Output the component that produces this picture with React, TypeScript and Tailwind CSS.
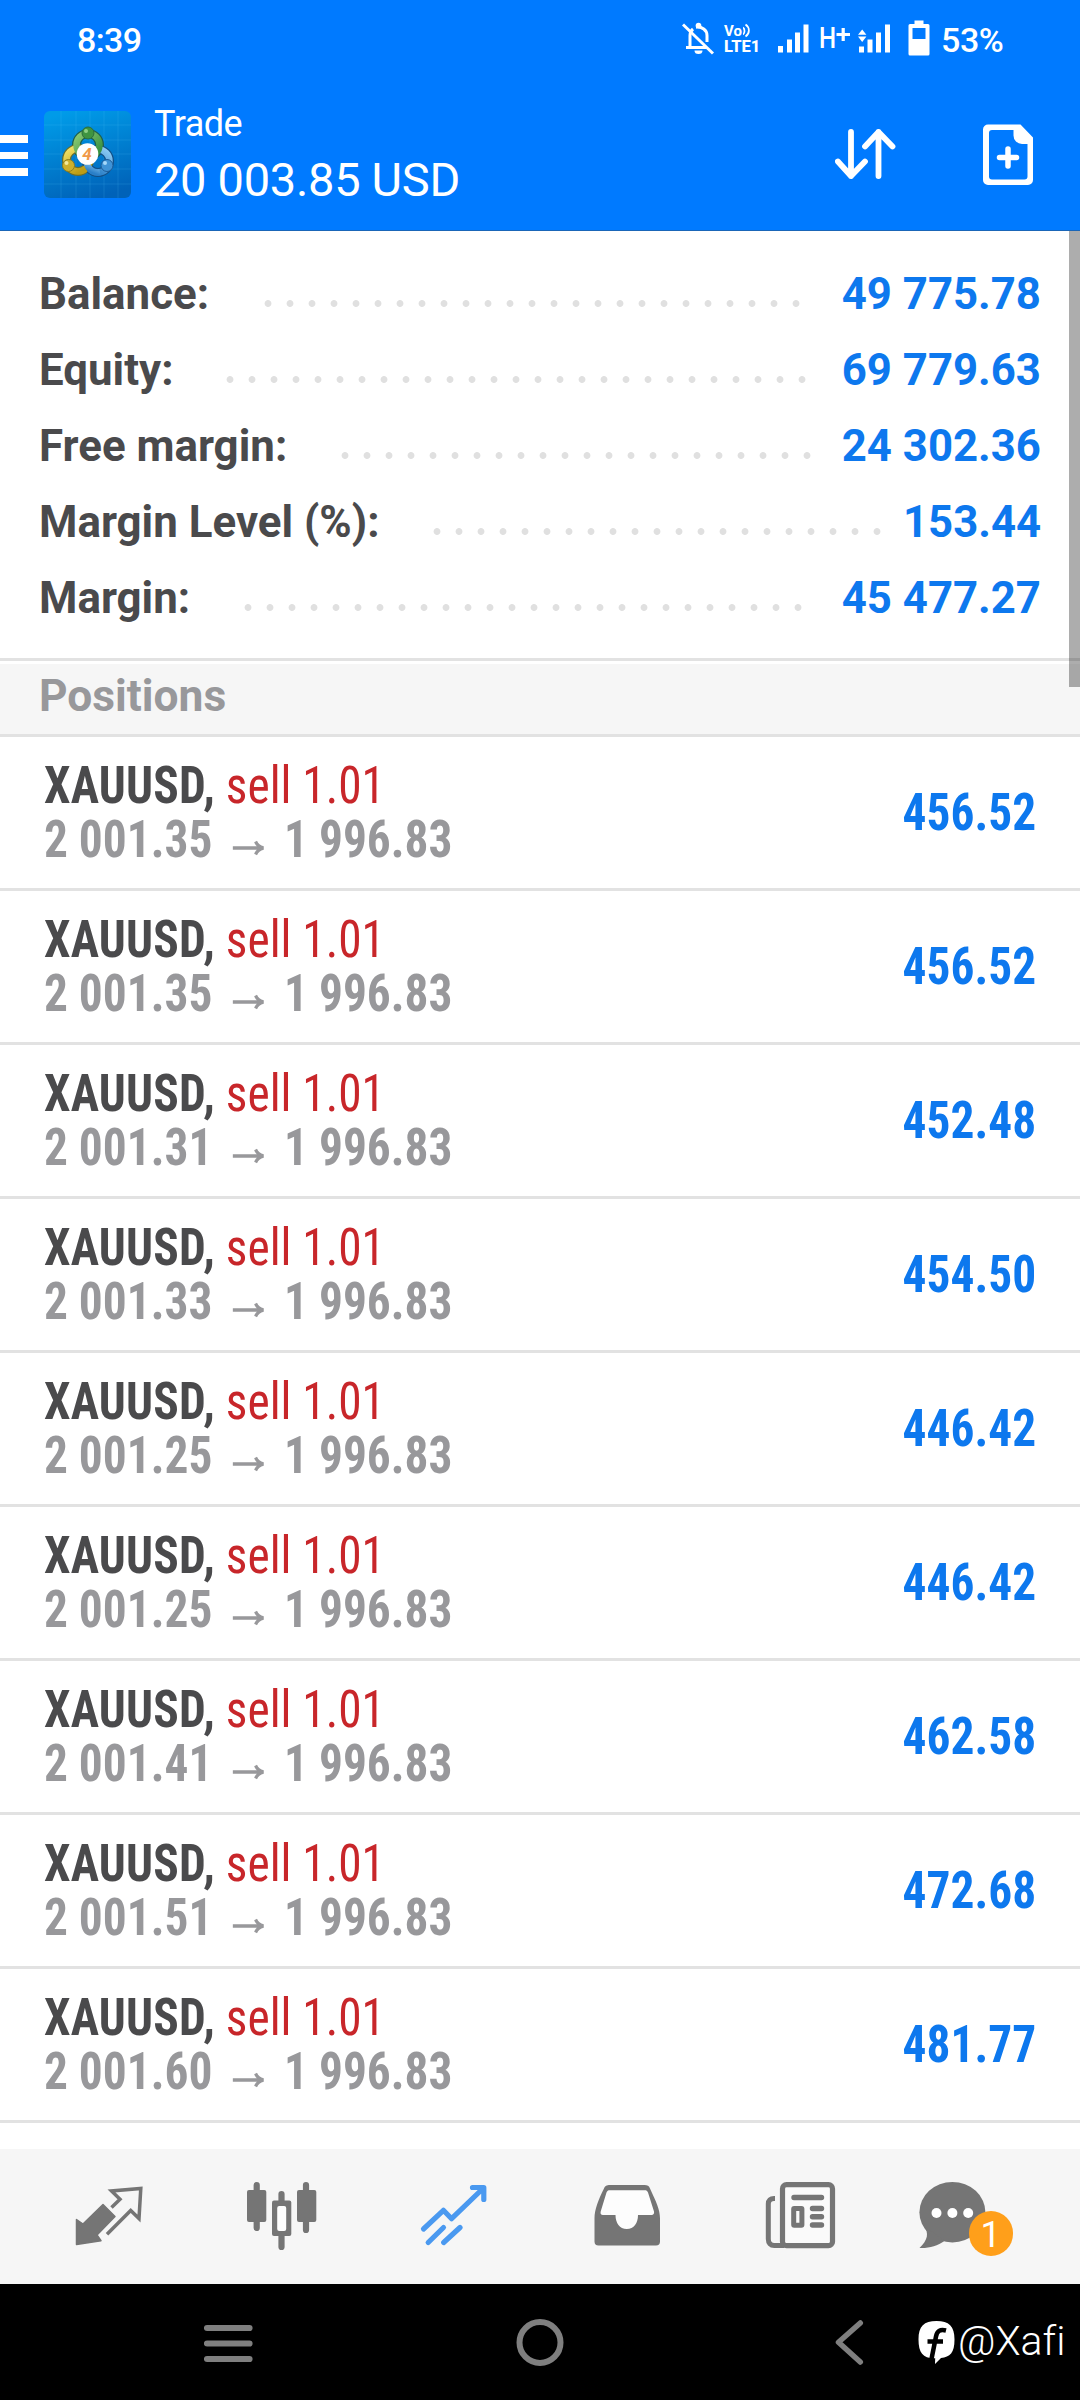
import type { ReactNode } from "react";

interface SummaryItem {
  label: string;
  value: string;
  // width of the label column and number of leader dots after it
  labelWidth: number;
  dots: number;
}

interface Position {
  open: string;
  current: string;
  profit: string;
}

const summary: SummaryItem[] = [
  { label: "Balance:", value: "49 775.78", labelWidth: 218, dots: 25 },
  { label: "Equity:", value: "69 779.63", labelWidth: 180, dots: 27 },
  { label: "Free margin:", value: "24 302.36", labelWidth: 295, dots: 22 },
  { label: "Margin Level (%):", value: "153.44", labelWidth: 387, dots: 21 },
  { label: "Margin:", value: "45 477.27", labelWidth: 198, dots: 26 },
];

const positions: Position[] = [
  { open: "2 001.35", current: "1 996.83", profit: "456.52" },
  { open: "2 001.35", current: "1 996.83", profit: "456.52" },
  { open: "2 001.31", current: "1 996.83", profit: "452.48" },
  { open: "2 001.33", current: "1 996.83", profit: "454.50" },
  { open: "2 001.25", current: "1 996.83", profit: "446.42" },
  { open: "2 001.25", current: "1 996.83", profit: "446.42" },
  { open: "2 001.41", current: "1 996.83", profit: "462.58" },
  { open: "2 001.51", current: "1 996.83", profit: "472.68" },
  { open: "2 001.60", current: "1 996.83", profit: "481.77" },
];

const StatusBar = () => (
  <div className="flex h-20 items-start pl-[77px] pt-[18px] text-white">
    <span className="w-[605px] text-[34px] leading-[44px] font-medium tracking-[-0.6px]">
      8:39
    </span>

    {/* Muted bell */}
    <svg width="32" height="40" viewBox="0 0 32 40" fill="none" stroke="currentColor">
      <path d="M8 28V17.5a8.5 8.5 0 0 1 3-6.5M14 9.2c6-.8 11 3 11 8.3V24M4 29.5h20" strokeWidth="3" />
      <circle cx="16.5" cy="7.5" r="2.8" fill="currentColor" stroke="none" />
      <path d="M12.5 32.5h8a4 3.5 0 0 1-8 0z" fill="currentColor" stroke="none" />
      <path d="M1 6.5 31 35.5" strokeWidth="3" />
    </svg>

    {/* VoLTE */}
    <div className="relative ml-[10px] h-10 w-[38px]">
      <span className="absolute top-[5px] left-0 text-[15px] leading-[17px] font-bold">Vo</span>
      <span className="absolute top-[20px] left-0 text-[16.5px] leading-[17px] font-extrabold whitespace-nowrap">
        LTE1
      </span>
      <svg className="absolute top-[5px] left-[19px]" width="9" height="16" viewBox="0 0 9 16" fill="none" stroke="currentColor" strokeWidth="1.8">
        <path d="M0 4.5c2 1.5 2 5.5 0 7M2.5 1.5c4.5 3 4.5 9 0 12" />
      </svg>
    </div>

    {/* Signal */}
    <svg className="ml-[16px]" width="31" height="40" viewBox="0 0 31 40" fill="currentColor">
      <path d="M0 28h5v6.5H0zM9 21.5h5v13H9zM17 14.5h5v20h-5zM25.5 6.5h5v28h-5z" />
    </svg>

    <span className="mt-[3px] ml-[10px] w-[17px] origin-left scale-x-[0.83] text-[29px] leading-[34px] font-medium">
      H
    </span>
    <svg width="15" height="40" viewBox="0 0 15 40" stroke="currentColor" strokeWidth="3.2">
      <path d="M.5 16.5H14M7.2 10v13" />
    </svg>

    {/* Data signal */}
    <svg className="ml-[7px]" width="33" height="40" viewBox="0 0 33 40" fill="currentColor">
      <path d="M1 28.5h5v6H1zM9.5 21.5h5v13h-5zM18 14.5h5v20h-5zM27 6.5h5v28h-5z" />
      <path d="M0 16.7 4.2 11.5l4.2 5.2zM0 18.5h8.4L4.2 24z" />
    </svg>

    {/* Battery */}
    <svg className="ml-[17px]" width="22" height="40" viewBox="0 0 22 40" fill="currentColor">
      <path
        fillRule="evenodd"
        d="M6.5 2.5h9V6H20a1.5 1.5 0 0 1 1.5 1.5V36a1.5 1.5 0 0 1-1.5 1.5H2A1.5 1.5 0 0 1 .5 36V7.5A1.5 1.5 0 0 1 2 6h4.5zM4.5 10v11h13V10z"
      />
    </svg>

    <span className="ml-[11px] text-[34px] leading-[44px] font-medium tracking-[-0.4px]">
      53%
    </span>
  </div>
);

const AppLogo = () => (
  <svg width="87" height="87" viewBox="0 0 87 87">
    <defs>
      <linearGradient id="tile" x1="0.3" y1="0" x2="0.6" y2="1">
        <stop offset="0" stopColor="#009be8" />
        <stop offset="1" stopColor="#0062b8" />
      </linearGradient>
      <linearGradient id="green" x1="0" y1="0" x2="1" y2="1">
        <stop offset="0" stopColor="#8ccb74" />
        <stop offset="1" stopColor="#2f8a3a" />
      </linearGradient>
      <linearGradient id="yellow" x1="0" y1="0" x2="0.6" y2="1">
        <stop offset="0" stopColor="#f3e36a" />
        <stop offset="1" stopColor="#bd9d14" />
      </linearGradient>
      <linearGradient id="blue" x1="1" y1="0" x2="0.4" y2="1">
        <stop offset="0" stopColor="#8fcdf5" />
        <stop offset="1" stopColor="#2a7fc8" />
      </linearGradient>
    </defs>
    <rect width="87" height="87" rx="6" fill="url(#tile)" />
    <path
      d="M17 0v87M32 0v87M46 0v87M60 0v87M74 0v87M0 14h87M0 29h87M0 43h87M0 58h87M0 73h87"
      stroke="#5cc4ff"
      strokeOpacity="0.16"
    />
    <g fill="none">
      <circle cx="44" cy="34" r="11.5" stroke="#1f5f4a" strokeWidth="9" />
      <circle cx="34" cy="49" r="11.5" stroke="#6a6f2c" strokeWidth="9" />
      <circle cx="54" cy="50" r="11.5" stroke="#124f86" strokeWidth="9" />
      <circle cx="54" cy="50" r="11.5" stroke="url(#blue)" strokeWidth="6.5" />
      <circle cx="34" cy="49" r="11.5" stroke="url(#yellow)" strokeWidth="6.5" />
      <path d="M43 53c2 6 7 9.500 13 8.200" stroke="url(#blue)" strokeWidth="6.5" />
      <circle cx="44" cy="34" r="11.5" stroke="url(#green)" strokeWidth="6.5" />
    </g>
    <circle cx="44" cy="22" r="6" fill="#3f9440" stroke="#2b6d3c" />
    <circle cx="24.5" cy="54.5" r="6" fill="#cdb02c" stroke="#8d7d1e" />
    <circle cx="63" cy="54.5" r="6" fill="#3f93d6" stroke="#1d5c99" />
    <circle cx="42" cy="20" r="2" fill="#8fd083" />
    <circle cx="22.5" cy="52" r="2" fill="#f4ea9a" />
    <circle cx="61" cy="52" r="2" fill="#a5d8fa" />
    <circle cx="43.5" cy="43" r="10.8" fill="#fff" />
    <text
      x="43"
      y="49"
      textAnchor="middle"
      className="font-[Roboto] text-[17px] font-bold italic"
      fill="#f09a4a"
    >
      4
    </text>
  </svg>
);

const Header = () => (
  <header className="h-[231px] border-b border-[#1a66b8] bg-[#007aff] text-white">
    <StatusBar />

    <div className="flex">
      <div className="mt-[55px] flex w-[44px] flex-col gap-[9px]">
        <span className="h-[7.5px] w-[28px] bg-white" />
        <span className="h-[7.5px] w-[28px] bg-white" />
        <span className="h-[7.5px] w-[28px] bg-white" />
      </div>

      <div className="mt-[31px]">
        <AppLogo />
      </div>

      <div className="mt-[22px] ml-[23px] w-[681px]">
        <p className="text-[36px] leading-[44px] tracking-[-0.5px]">Trade</p>
        <p className="mt-[6px] text-[47px] leading-[56px] tracking-[-0.3px]">
          20 003.85 USD
        </p>
      </div>

      <svg className="mt-[46px]" width="62" height="56" viewBox="0 0 62 56" fill="none" stroke="currentColor" strokeWidth="5.8" strokeLinecap="round" strokeLinejoin="round">
        <path d="M16 6v44M2.9 35.5 16 50l14-14.5" />
        <path d="M43.5 50V6M30 20.5 43.5 6l14 14.5" />
      </svg>

      <svg className="mt-[44px] ml-[86px]" width="51" height="62" viewBox="0 0 51 62">
        <path
          fillRule="evenodd"
          fill="currentColor"
          d="M5 .5h32.5L50 13.5V56a5 5 0 0 1-5 5H5a5 5 0 0 1-5-5V5.5a5 5 0 0 1 5-5zM9 6a3 3 0 0 0-3 3v43.5a3 3 0 0 0 3 3h32.5a3 3 0 0 0 3-3V20H39a8.5 8.5 0 0 1-8.5-8.5V6z"
        />
        <path d="M25 25v17M16.5 33.5h17" stroke="currentColor" strokeWidth="5.5" strokeLinecap="round" />
      </svg>
    </div>
  </header>
);

const SummaryRow = ({ label, value, labelWidth, dots }: SummaryItem) => (
  <div className="flex h-[76px] pl-[39px] pr-[39px] text-[45px] leading-[76px] font-bold whitespace-nowrap">
    <div style={{ width: labelWidth }}>
      <span className="inline-block origin-left scale-x-[0.975] text-[#4a4a4c]">{label}</span>
    </div>
    <div
      className="mt-[44px] h-[7px] bg-[radial-gradient(circle,#e0e0e0_3px,transparent_3.8px)] bg-[length:22px_7px] bg-repeat-x"
      style={{ width: dots * 22 }}
    />
    <span className="ml-auto origin-right scale-x-[0.972] text-[#0d78ee]">{value}</span>
  </div>
);

const PositionRow = ({ open, current, profit }: Position) => (
  <div className="flex h-[154px] justify-between border-b-3 border-[#e2e2e2] pr-[44px] pl-[44px] text-[51.5px] font-stretch-75% whitespace-nowrap">
    <div className="mt-[22px] origin-left scale-x-[0.92] leading-[54px]">
      <p className="font-bold text-[#4a4a4c]">
        <span className="tracking-[0.2px]">XAUUSD,</span>{" "}
        <span className="font-normal text-[#c8262a]">sell 1.01</span>
      </p>
      <p className="flex font-bold text-[#98989b]">
        <span className="w-[205px]">{open}</span>
        <svg className="mt-[26px] mr-[20px]" width="36" height="18" viewBox="0 0 36 18" fill="none" stroke="currentColor" strokeWidth="3.4">
          <path d="M0 9h32M25 2.5c1.5 3.5 4 5.5 8.5 6.5-4.5 1-7 3-8.500 6.500" />
        </svg>
        <span>{current}</span>
      </p>
    </div>
    <span className="origin-right scale-x-[0.92] leading-[151px] font-bold text-[#0d78ee]">
      {profit}
    </span>
  </div>
);

const TabIcon = ({ children }: { children: ReactNode }) => (
  <svg width="120" height="81" viewBox="0 0 120 81" fill="none">
    {children}
  </svg>
);

const TabBar = () => (
  <nav className="flex h-[135px] items-center bg-[#f6f6f6] pl-[22px] text-[#757575]">
    {/* Quotes */}
    <div className="flex w-[173px] justify-center">
      <TabIcon>
        <path
          d="M27.5 43.5 34 48 54 28.5 66 40.5 48 59l4 5.7-24.5 3.8z"
          fill="currentColor"
          stroke="currentColor"
          strokeWidth="1.5"
          strokeLinejoin="round"
        />
        <path d="m62.5 31.5 8.5-8.2-8.5-8.3 29.3-2.6-1.8 30.1-8.3-8L58 58.2" stroke="currentColor" strokeWidth="3.5" />
      </TabIcon>
    </div>

    {/* Charts */}
    <div className="flex w-[173px] justify-center">
      <TabIcon>
        <path d="M34.7 9v43M59.5 18v53M84 9v45" stroke="currentColor" strokeWidth="6.2" strokeLinecap="round" />
        <rect x="25" y="14" width="19.3" height="32" rx="2" fill="currentColor" />
        <rect x="50" y="24.5" width="19.3" height="35.5" rx="2" fill="currentColor" />
        <rect x="55.2" y="30" width="9" height="25" rx="2" fill="#fdfdfd" />
        <rect x="75" y="14" width="19.3" height="32" rx="2" fill="currentColor" />
      </TabIcon>
    </div>

    {/* Trade */}
    <div className="flex w-[172px] justify-center text-[#4a99f0]">
      <TabIcon>
        <g stroke="currentColor" strokeWidth="5.2" strokeLinecap="round" strokeLinejoin="round">
          <path d="M29.5 53 49.4 34.3 57.6 42.7 89.5 12M78.5 11.5h11.3v12" />
          <path d="M34.2 66.5 49.5 51.5M49.7 66.5 66 51.5" />
        </g>
      </TabIcon>
    </div>

    {/* History */}
    <div className="flex w-[173px] justify-center">
      <TabIcon>
        <path
          d="M43 9h34.5c3 0 4.5.8 5.5 3.5 6 13 10 21 10 30v23a4 4 0 0 1-4 4H31.5a4 4 0 0 1-4-4v-23c0-9 4-19 9.5-30 1.2-2.7 2.5-3.5 6-3.5z"
          fill="currentColor"
        />
        <path
          d="M43 14.3h34.5c2 0 2.8.6 3.5 2.2l6 19c.4 2-.5 3.5-2.5 3.5H71c0 8-4 14-11.2 14S48.5 47 48.5 39H36c-2.2 0-2.8-1.5-2.3-3.5l5.8-19c.7-1.6 1.5-2.2 3.5-2.2z"
          fill="#fdfdfd"
        />
      </TabIcon>
    </div>

    {/* News */}
    <div className="flex w-[173px] justify-center">
      <TabIcon>
        <path d="M35 22.5h-1c-3.5 0-5.7 2-5.7 5.5v35c0 4 2.2 6.5 6 6.5H44" stroke="currentColor" strokeWidth="5" />
        <rect x="42.5" y="8.7" width="50" height="61" rx="4" fill="#fafafa" stroke="currentColor" strokeWidth="5.2" />
        <path d="M54 21.5h27.5M72.5 32.5h9M72.5 40.7h9M72.5 49h9" stroke="currentColor" strokeWidth="5.4" strokeLinecap="round" />
        <rect x="53.7" y="32.5" width="8.2" height="16.7" rx="0.5" fill="#fafafa" stroke="currentColor" strokeWidth="5" />
      </TabIcon>
    </div>

    {/* Messages */}
    <div className="relative flex w-[173px] justify-center">
      <TabIcon>
        <ellipse cx="39.4" cy="36.2" rx="33" ry="30.2" fill="currentColor" />
        <path d="M11 50c5 7 4 14-4.5 22 9 .5 18-2 25-7z" fill="currentColor" />
        <circle cx="23.5" cy="37" r="5" fill="#fff" />
        <circle cx="39.4" cy="37" r="5" fill="#fff" />
        <circle cx="55.2" cy="37" r="5" fill="#fff" />
      </TabIcon>
      <span className="absolute top-[35px] left-[82.5px] h-[45px] w-[44px] rounded-full bg-[#ff9f1a] text-center text-[36px] leading-[48px] text-white">
        1
      </span>
    </div>
  </nav>
);

const SystemNav = () => (
  <div className="flex h-[116px] items-center bg-black text-[#7f7f7f]">
    <svg className="ml-[204px]" width="49" height="48" viewBox="0 0 49 48" stroke="currentColor" strokeWidth="6.2" strokeLinecap="round">
      <path d="M3 10h42.5M3 25.5h42.5M3 41h42.5" />
    </svg>
    <svg className="ml-[263px]" width="48" height="48" viewBox="0 0 48 48" fill="none" stroke="currentColor" strokeWidth="6">
      <circle cx="24" cy="24.5" r="20.5" />
    </svg>
    <svg className="ml-[270px]" width="30" height="48" viewBox="0 0 30 48" fill="none" stroke="currentColor" strokeWidth="5.5" strokeLinecap="round" strokeLinejoin="round">
      <path d="M26.3 5 4.5 24.3 26.3 44" />
    </svg>
    <div className="ml-[54px] flex items-center text-white">
      <svg width="37" height="43" viewBox="0 0 37 43">
        <path
          d="M18.5 0C31 0 36.5 5 36.5 18.5 36.5 32 32 36 23 37l-6 6 .2-5.8C5 37.5.5 32 .5 18.5.5 5 6 0 18.5 0z"
          fill="currentColor"
        />
        <path d="M28 9.5c-6-1.5-9 .5-10 6L13.5 38M9.5 20.5h15.5" stroke="#000" strokeWidth="4.5" fill="none" />
      </svg>
      <span className="mb-[3px] ml-[3px] text-[41px] leading-[48px] font-[350] whitespace-nowrap [font-variant-ligatures:none]">
        @Xafi
      </span>
    </div>
  </div>
);

export default function App() {
  return (
    <div className="relative flex h-[2400px] w-[1080px] flex-col overflow-hidden bg-white font-[Roboto,sans-serif]">
      <Header />

      <main className="flex-1">
        <section className="border-b-3 border-[#e2e2e2] pt-[25px] pb-[22px]">
          {summary.map((item) => (
            <SummaryRow key={item.label} {...item} />
          ))}
        </section>

        <h2 className="mt-[3px] h-[73px] border-b-3 border-[#e2e2e2] bg-[#f6f6f6] pl-[39px] text-[45px] leading-[64px] font-bold text-[#98989b]">
          <span className="inline-block origin-left scale-x-[0.985]">Positions</span>
        </h2>

        {positions.map((position, index) => (
          <PositionRow key={index} {...position} />
        ))}
      </main>

      <TabBar />
      <SystemNav />

      {/* Scrollbar thumb over the list */}
      <div className="absolute top-[231px] right-0 h-[456px] w-[11px] bg-black/32" />
    </div>
  );
}
